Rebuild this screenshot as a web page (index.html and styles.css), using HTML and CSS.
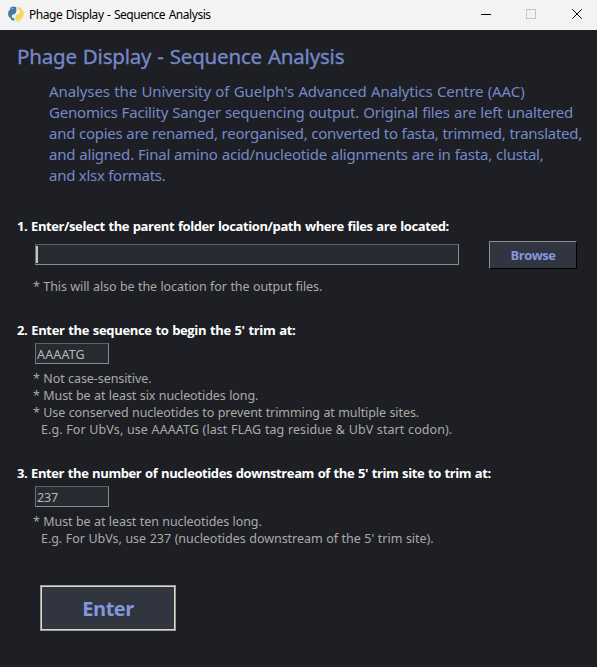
FILE: index.html
```
<!DOCTYPE html>
<html lang="en">
<head>
<meta charset="utf-8">
<title>Phage Display - Sequence Analysis</title>
<link rel="stylesheet" href="styles.css">
</head>
<body>
<header class="titlebar">
  <svg class="logo" width="16" height="16" viewBox="0 0 16 16">
    <path fill="#3f7ba9" d="M3.200 1Q6 0 8.300 1.200V5.800Q8 7.400 6.500 7.900L4.500 8.700Q3.600 9.500 3.800 11.400L6.300 12.300V14.800Q3.200 14.800 2.500 12 0 11 .1 7.500 .1 4.400 2 3.800 2.200 1.600 3.200 1Z"/>
    <path fill="#f6d65c" d="M9.800 1Q12.800.4 13.500 3.200V4.200Q16 4.600 15.800 8 15.800 11.200 13.500 12.200 13.200 15 10.500 15.400 7.500 15.600 7.400 13.500V10.400Q7.600 9 9 8.400L11 7.800Q12.200 7 12 5 11.500 3.800 9.800 3.600Z"/>
    <circle cx="4.600" cy="2.300" r=".6" fill="#dfe8ee"/><circle cx="11" cy="13.700" r=".6" fill="#fff"/>
  </svg>
  <span class="caption">Phage Display - Sequence Analysis</span>
  <svg class="controls" width="138" height="30" viewBox="0 0 138 30" fill="none" shape-rendering="crispEdges">
    <path stroke="#000" d="M22 14.500h10"/>
    <path stroke="#c4c4c4" d="M67.500 9.500h9v9h-9z"/>
    <path stroke="#000" shape-rendering="auto" d="M113.300 9.300l9.400 9.400m0-9.400l-9.400 9.400"/>
  </svg>
</header>
<main>
  <h1>Phage Display - Sequence Analysis</h1>
  <p class="intro">
    <span class="i1">Analyses the University of Guelph's Advanced Analytics Centre (AAC)</span>
    <span class="i2">Genomics Facility Sanger sequencing output. Original files are left unaltered</span>
    <span class="i3">and copies are renamed, reorganised, converted to fasta, trimmed, translated,</span>
    <span class="i4">and aligned. Final amino acid/nucleotide alignments are in fasta, clustal,</span>
    <span class="i5">and xlsx formats.</span>
  </p>
  <section class="folder">
    <h2 class="q1">1. Enter/select the parent folder location/path where files are located:</h2>
    <div class="row">
      <div class="field wide"><span class="caret"></span></div>
      <button class="browse">Browse</button>
    </div>
    <p class="notes"><span class="n1">* This will also be the location for the output files.</span></p>
  </section>
  <section class="sequence">
    <h2 class="q2">2. Enter the sequence to begin the 5' trim at:</h2>
    <div class="field seq">AAAATG</div>
    <p class="notes">
      <span class="n2">* Not case-sensitive.</span>
      <span class="n3">* Must be at least six nucleotides long.</span>
      <span class="n4">* Use conserved nucleotides to prevent trimming at multiple sites.</span>
      <span class="n5 example">E.g. For UbVs, use AAAATG (last FLAG tag residue &amp; UbV start codon).</span>
    </p>
  </section>
  <section class="count">
    <h2 class="q3">3. Enter the number of nucleotides downstream of the 5' trim site to trim at:</h2>
    <div class="field">237</div>
    <p class="notes">
      <span class="n6">* Must be at least ten nucleotides long.</span>
      <span class="n7 example">E.g. For UbVs, use 237 (nucleotides downstream of the 5' trim site).</span>
    </p>
  </section>
  <button class="enter">Enter</button>
</main>
</body>
</html>
```
FILE: styles.css
```
* { box-sizing: border-box; }
body {
  margin: 0;
  height: 667px;
  overflow: hidden;
  background: #1e1f24;
  font-family: "Noto Sans", "Open Sans", sans-serif;
  white-space: nowrap;
}
h1, h2, p { margin: 0; }
.titlebar {
  display: flex;
  height: 30px;
  background: #f3f3f3;
  color: #000;
}
.logo { margin: 6px 5px 0 8px; }
.caption { font-size: 12px; line-height: 30px; letter-spacing: -0.45px; word-spacing: 0.800px; }
.controls { margin-left: auto; }
main { padding: 12px 0 0 17px; }
h1 {
  font-size: 20.500px;
  font-weight: 400;
  line-height: 28px;
  color: #7589c8;
  letter-spacing: -0.200px;
  word-spacing: 0.900px;
  -webkit-text-stroke: 0.3px #7589c8;
}
.intro {
  padding: 11px 0 0 32px;
  font-size: 15px;
  line-height: 21px;
  color: #7589c8;
  letter-spacing: -0.270px;
}
.intro .i1 { letter-spacing: -0.100px; word-spacing: 0.600px; }
.intro .i2 { letter-spacing: -0.200px; word-spacing: 0.500px; }
.intro .i3 { word-spacing: 0.250px; }
.intro .i4 { letter-spacing: -0.210px; word-spacing: 0.300px; }
.intro span, .notes span { display: block; width: max-content; }
h2 {
  font-family: "Open Sans", sans-serif;
  font-size: 13px;
  font-weight: 700;
  line-height: 18px;
  color: #fff;
  letter-spacing: -0.400px;
  word-spacing: 0.700px;
}
h2.q2 { letter-spacing: -0.340px; }
.folder { margin-top: 31px; }
.row { display: flex; align-items: center; height: 28px; margin-top: 6px; }
.field {
  width: 74px;
  height: 21px;
  margin: 4px 0 0 18px;
  padding-left: 1px;
  border: 1px solid #8c8c8c;
  border-top-color: #606060;
  border-left-color: #707070;
  background: #272a31;
  color: #b8b8b8;
  font-size: 12.500px;
  line-height: 21px;
  letter-spacing: -0.100px;
}
.seq { letter-spacing: 0.150px; }
.row .wide { width: 424px; margin-top: -1px; padding: 1px 0 0 0; }
.caret { display: block; width: 2px; height: 17px; background: #c3c3c3; }
button { padding: 0; font-family: "Open Sans", sans-serif; font-weight: 700; background: #31353f; color: #8298dc; }
.browse {
  width: 88px;
  height: 28px;
  margin-left: 30px;
  border: 1px solid #000;
  border-top-color: #8c8e93;
  border-left-color: #8c8e93;
  font-size: 13px;
  letter-spacing: -0.500px;
}
.notes {
  padding: 6px 0 0 16px;
  font-size: 12.500px;
  line-height: 17px;
  color: #aaa;
  letter-spacing: -0.080px;
  word-spacing: 0.300px;
}
.notes .n5 { letter-spacing: 0.080px; word-spacing: 0.300px; }
.notes .n7 { letter-spacing: -0.040px; word-spacing: 0.400px; }
.folder .notes { padding-top: 9px; }
.notes .example { margin-left: 8px; }
.sequence { margin-top: 26px; }
.count { margin-top: 26px; }
.enter {
  display: block;
  width: 136px;
  height: 46px;
  margin: 38px 0 0 23px;
  border: 1px solid #9d9994;
  box-shadow: inset 0 0 0 1px #ddd8d0;
  font-size: 20px;
  letter-spacing: -0.500px;
}
```
